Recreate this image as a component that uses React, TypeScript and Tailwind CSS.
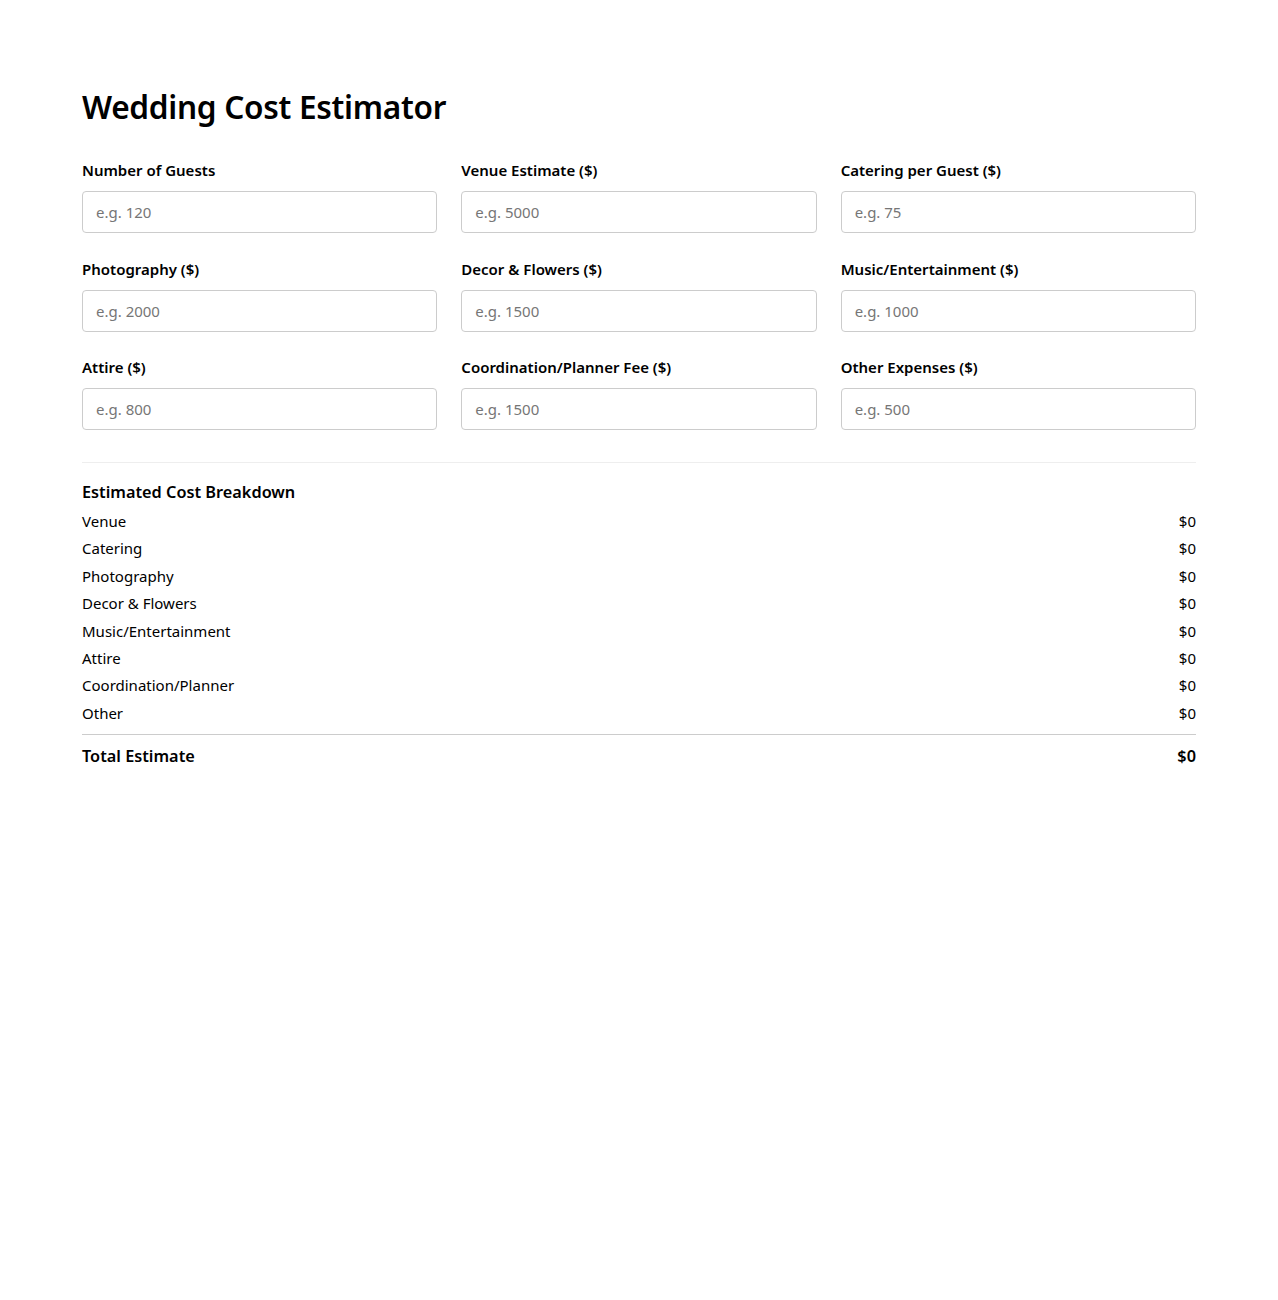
import React from "react";

const fields = [
  { label: "Number of Guests", ph: "e.g. 120" },
  { label: "Venue Estimate ($)", ph: "e.g. 5000" },
  { label: "Catering per Guest ($)", ph: "e.g. 75" },
  { label: "Photography ($)", ph: "e.g. 2000" },
  { label: "Decor & Flowers ($)", ph: "e.g. 1500" },
  { label: "Music/Entertainment ($)", ph: "e.g. 1000" },
  { label: "Attire ($)", ph: "e.g. 800" },
  { label: "Coordination/Planner Fee ($)", ph: "e.g. 1500" },
  { label: "Other Expenses ($)", ph: "e.g. 500" },
];

const rows = [
  "Venue",
  "Catering",
  "Photography",
  "Decor & Flowers",
  "Music/Entertainment",
  "Attire",
  "Coordination/Planner",
  "Other",
];

export default function App() {
  return (
    <div
      className="min-h-[1300px] bg-white text-[#111] px-[82px] pt-[87px]"
      style={{ fontFamily: '"Noto Sans", "Open Sans", sans-serif' }}
    >
      <h1 className="text-[31.6px] leading-[40px] font-semibold tracking-[-0.3px] text-black">
        Wedding Cost Estimator
      </h1>
      <div className="mt-[32px] grid grid-cols-3 gap-x-6 gap-y-[24.5px]">
        {fields.map((f) => (
          <div key={f.label} className="flex flex-col">
            <label className="text-[15px] leading-[22px] font-semibold text-black">
              {f.label}
            </label>
            <input
              type="text"
              placeholder={f.ph}
              className="mt-[10px] h-[42px] w-full rounded-[4px] border border-[#cccccc] px-[13px] text-[15px] text-black placeholder:text-[#767676] outline-none"
            />
          </div>
        ))}
      </div>
      <div className="mt-[32px] border-t border-[#eeeeee]" />
      <h2 className="mt-[17px] text-[16.3px] leading-[24px] font-semibold text-black">
        Estimated Cost Breakdown
      </h2>
      <div className="mt-[4px] flex flex-col">
        {rows.map((r) => (
          <div key={r} className="flex justify-between text-[15px] leading-[27.4px] text-black">
            <span>{r}</span>
            <span>$0</span>
          </div>
        ))}
      </div>
      <div className="mt-[7px] border-t border-[#cccccc]" />
      <div className="mt-[9px] flex justify-between text-[16.3px] leading-[24px] font-semibold text-black">
        <span>Total Estimate</span>
        <span>$0</span>
      </div>
    </div>
  );
}
